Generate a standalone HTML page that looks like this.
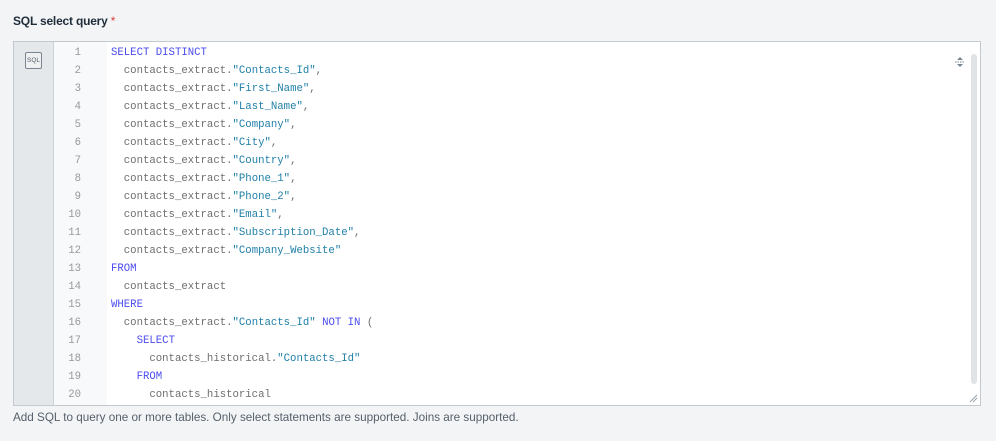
<!DOCTYPE html>
<html><head><style>
body{margin:0;width:996px;height:441px;background:#f3f4f6;font-family:"Liberation Sans",sans-serif;position:relative;overflow:hidden}
.lbl{position:absolute;left:13px;top:14px;font-size:12px;font-weight:bold;color:#1f2d3a;letter-spacing:-0.2px}
.lbl span{color:#d93b3b;font-weight:normal}
.box{position:absolute;left:13px;top:41px;width:966px;height:363px;border:1px solid #c3c9cf;background:#fff;overflow:hidden}
.tb{position:absolute;left:0;top:0;width:39px;height:100%;background:#e5e8eb;border-right:1px solid #cdd2d7}
.sql{position:absolute;left:11px;top:10px;width:15px;height:15px;border:1px solid #7a8590;border-radius:2px;font-size:6.5px;color:#55606b;text-align:center;line-height:15px;background:#eef0f2}
.gut{position:absolute;left:40px;top:0;width:53px;height:100%;background:#f8f9fa}
.code{position:absolute;left:0;top:1px;font-family:"Liberation Mono",monospace;font-size:10.67px;line-height:18px;white-space:pre;color:#6e6e6e}
.n{position:absolute;left:40px;width:27px;text-align:right;color:#999}
.l{position:absolute;left:97px}
.k{color:#4b4bf0}.s{color:#1f7fa8}
.sb{position:absolute;left:957px;top:12px;width:6px;height:330px;background:#e1e4e7;border-radius:3px}
.help{position:absolute;left:13px;top:411px;font-size:11.7px;color:#55606b}
</style></head><body>
<div class="lbl">SQL select query <span>*</span></div>
<div class="box">
<div class="tb"><div class="sql">SQL</div></div>
<div class="gut"></div>
<div class="code">
<div class="n" style="top:1px">1</div><div class="l" style="top:1px"><span class="k">SELECT DISTINCT</span></div>
<div class="n" style="top:19px">2</div><div class="l" style="top:19px">  contacts_extract.<span class="s">"Contacts_Id"</span>,</div>
<div class="n" style="top:37px">3</div><div class="l" style="top:37px">  contacts_extract.<span class="s">"First_Name"</span>,</div>
<div class="n" style="top:55px">4</div><div class="l" style="top:55px">  contacts_extract.<span class="s">"Last_Name"</span>,</div>
<div class="n" style="top:73px">5</div><div class="l" style="top:73px">  contacts_extract.<span class="s">"Company"</span>,</div>
<div class="n" style="top:91px">6</div><div class="l" style="top:91px">  contacts_extract.<span class="s">"City"</span>,</div>
<div class="n" style="top:109px">7</div><div class="l" style="top:109px">  contacts_extract.<span class="s">"Country"</span>,</div>
<div class="n" style="top:127px">8</div><div class="l" style="top:127px">  contacts_extract.<span class="s">"Phone_1"</span>,</div>
<div class="n" style="top:145px">9</div><div class="l" style="top:145px">  contacts_extract.<span class="s">"Phone_2"</span>,</div>
<div class="n" style="top:163px">10</div><div class="l" style="top:163px">  contacts_extract.<span class="s">"Email"</span>,</div>
<div class="n" style="top:181px">11</div><div class="l" style="top:181px">  contacts_extract.<span class="s">"Subscription_Date"</span>,</div>
<div class="n" style="top:199px">12</div><div class="l" style="top:199px">  contacts_extract.<span class="s">"Company_Website"</span></div>
<div class="n" style="top:217px">13</div><div class="l" style="top:217px"><span class="k">FROM</span></div>
<div class="n" style="top:235px">14</div><div class="l" style="top:235px">  contacts_extract</div>
<div class="n" style="top:253px">15</div><div class="l" style="top:253px"><span class="k">WHERE</span></div>
<div class="n" style="top:271px">16</div><div class="l" style="top:271px">  contacts_extract.<span class="s">"Contacts_Id"</span> <span class="k">NOT IN</span> (</div>
<div class="n" style="top:289px">17</div><div class="l" style="top:289px">    <span class="k">SELECT</span></div>
<div class="n" style="top:307px">18</div><div class="l" style="top:307px">      contacts_historical.<span class="s">"Contacts_Id"</span></div>
<div class="n" style="top:325px">19</div><div class="l" style="top:325px">    <span class="k">FROM</span></div>
<div class="n" style="top:343px">20</div><div class="l" style="top:343px">      contacts_historical</div>
</div>
<svg style="position:absolute;left:940px;top:14px" width="12" height="12" viewBox="0 0 12 12"><path d="M6 1L9 4H3Z M6 11L9 8H3Z" fill="#7a8590"/><path d="M1 6H11" stroke="#7a8590" stroke-width="1" stroke-dasharray="1.5 1"/></svg>
<div class="sb"></div>
<svg style="position:absolute;left:954px;top:351px" width="10" height="10"><path d="M2 9L9 2M5 9L9 5" stroke="#9aa3ab" stroke-width="1"/></svg>
</div>
<div class="help">Add SQL to query one or more tables. Only select statements are supported. Joins are supported.</div>
</body></html>
